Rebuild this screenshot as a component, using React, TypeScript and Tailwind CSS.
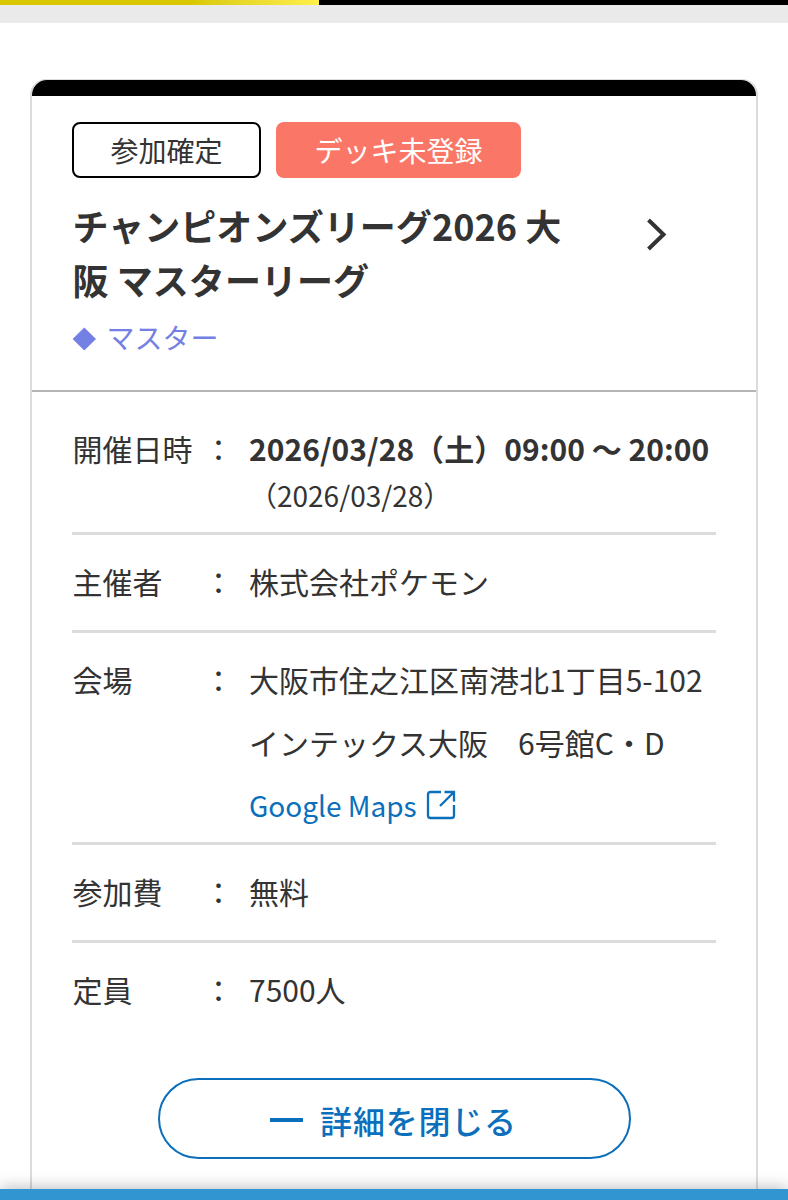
import type { ReactNode } from "react";

function Row({ label, height, children }: { label: string; height: string; children: ReactNode }) {
  return (
    <div className={`flex border-b-[3px] border-[#dcdcdc] pt-[15px] pl-[0.5px] leading-[62.5px] ${height}`}>
      <dt className="w-[131px] shrink-0">{label}</dt>
      <span className="w-[45.5px] shrink-0">：</span>
      <dd className="whitespace-nowrap">{children}</dd>
    </div>
  );
}

function ExternalIcon() {
  return (
    <svg width="30" height="30" viewBox="0 0 30 30" fill="none" stroke="#0b6fbc" strokeWidth="2.3">
      <path d="M15 2H4.5Q2 2 2 4.5V25.5Q2 28 4.5 28H25.5Q28 28 28 25.5V15" />
      <path d="M18.5 2H28V11.5M28 2L14 16" />
    </svg>
  );
}

export default function App() {
  return (
    <div className="relative flex h-[1200px] w-[788px] flex-col overflow-hidden bg-white font-['Noto_Sans_CJK_JP',sans-serif] text-[30px] text-[#333]">
      <div className="flex h-[5px] shrink-0 bg-black">
        <div className="w-[319px] bg-linear-to-r from-[#d9c800] from-60% to-[#fff04a]" />
      </div>
      <div className="h-[18px] shrink-0 bg-[#eaeaea]" />

      <main className="mx-[30px] mt-[56px] h-[1200px] w-[728px] shrink-0 rounded-t-[16px] border-x-2 border-t border-[#dcdcdc]">
        <div className="h-4 rounded-t-[15px] bg-black" />
        <section className="flex h-[296px] flex-col border-b-2 border-[#b5b5b5] px-10 pt-[26px]">
          <div className="flex gap-[15px] text-[28px]">
            <span className="flex h-14 w-[189px] items-center justify-center rounded-[8px] border-2 border-black leading-[54px]">参加確定</span>
            <span className="flex h-14 w-[245px] items-center justify-center rounded-[8px] bg-[#fa7768] leading-[58px] text-white">デッキ未登録</span>
          </div>
          <div className="mt-5 flex">
            <h1 className="w-[501px] pl-[0.5px] text-[36px] leading-[54px] font-bold tracking-[0.05px]">チャンピオンズリーグ2026 大阪 マスターリーグ</h1>
            <svg className="mt-[18px] ml-[72px]" width="24" height="36" viewBox="0 0 24 36" fill="none" stroke="#333" strokeWidth="4">
              <path d="M3.5 4L18.5 18.5L3.5 33" />
            </svg>
          </div>
          <div className="mt-[10px] flex items-center text-[28px] leading-[42px] text-[#7480e3]">
            <svg className="mt-[3px] mr-[9.5px]" width="25" height="24" viewBox="0 0 25 24" fill="#7480e3">
              <path d="M12.3 .5L24 12L12.3 23.5L.6 12Z" />
            </svg>
            マスター
          </div>
        </section>

        <dl className="px-10 pt-7">
          <div className="flex h-[115px] border-b-[3px] border-[#dcdcdc] pt-[6px] pl-[0.5px] leading-[45px]">
            <dt className="w-[131px] shrink-0">開催日時</dt>
            <span className="w-[45.5px] shrink-0">：</span>
            <dd className="whitespace-nowrap">
              <div className="font-bold tracking-[0.03px]">2026/03/28（土）09:00 〜 20:00</div>
              <div className="text-[28px] leading-[48px]">（2026/03/28）</div>
            </dd>
          </div>
          <Row label="主催者" height="h-[98px]">株式会社ポケモン</Row>
          <Row label="会場" height="h-[212px]">
            大阪市住之江区南港北1丁目5-102
            <br />
            インテックス大阪　6号館C・D
            <a className="flex items-center gap-[9px] pt-px text-[28px] text-[#0b6fbc]">Google Maps<ExternalIcon /></a>
          </Row>
          <Row label="参加費" height="h-[98px]">無料</Row>
          <div className="flex h-[135px] pt-[15px] pl-[0.5px] leading-[62.5px]">
            <dt className="w-[131px] shrink-0">定員</dt>
            <span className="w-[45.5px] shrink-0">：</span>
            <dd>7500人</dd>
          </div>
        </dl>

        <button className="mx-auto flex h-[81px] w-[473px] items-center justify-center rounded-full border-2 border-[#0b6fbc] pt-[2px] pr-px text-[32px] font-medium tracking-[0.8px] text-[#0b6fbc]">
          <span className="mr-[17px] h-[4px] w-[33px] bg-[#0b6fbc]" />
          <span className="leading-[76px]">詳細を閉じる</span>
        </button>
      </main>

      <div className="absolute inset-x-0 bottom-0 h-[11px] bg-[#3195d2] shadow-[0_0_16px_rgba(0,0,0,0.35)]" />
    </div>
  );
}
